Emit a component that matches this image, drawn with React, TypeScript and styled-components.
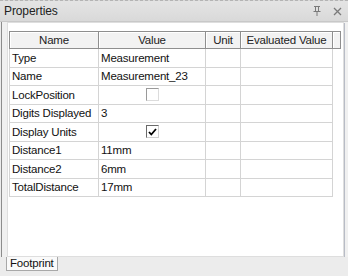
import styled, { createGlobalStyle } from 'styled-components'

const GlobalStyle = createGlobalStyle`
  html, body {
    margin: 0;
    padding: 0;
    background: #ececec;
  }
  body {
    font-family: "Liberation Sans", Arial, sans-serif;
    font-size: 11.5px;
    letter-spacing: -0.2px;
    color: #1a1a1a;
  }
`

interface PropRow {
  name: string
  value?: string
  check?: boolean
}

const rows: PropRow[] = [
  { name: 'Type', value: 'Measurement' },
  { name: 'Name', value: 'Measurement_23' },
  { name: 'LockPosition', check: false },
  { name: 'Digits Displayed', value: '3' },
  { name: 'Display Units', check: true },
  { name: 'Distance1', value: '11mm' },
  { name: 'Distance2', value: '6mm' },
  { name: 'TotalDistance', value: '17mm' },
]

const Panel = styled.div`
  width: 348px;
  height: 276px;
  display: flex;
  flex-direction: column;
  overflow: hidden;
`

const TitleBar = styled.div`
  height: 22px;
  box-sizing: border-box;
  border-top: 1px dashed #b4b4b4;
  border-bottom: 1px solid #c8c8c8;
  background: linear-gradient(#e4e4e4, #d9d9d9);
  display: flex;
  align-items: center;
  padding: 0 6px 0 4px;
  gap: 10px;
`

const Title = styled.span`
  flex: 1;
  font-size: 12px;
  letter-spacing: -0.1px;
  color: #222;
`

const TitleButton = styled.span`
  width: 10px;
  height: 10px;
  display: flex;
  align-items: center;
  justify-content: center;
`

const Frame = styled.div`
  flex: 1;
  margin-left: 1px;
  border-left: 1px solid #8c8c8c;
  background: #f0f0f0;
  padding: 0 4px 0 5px;
  display: flex;
`

const Content = styled.div`
  flex: 1;
  background: #fff;
  border: 1px solid #dedede;
  box-shadow: 1px 1px 0 #b8bcc6;
  padding: 8px 0 0 1px;
`

const Grid = styled.div`
  display: grid;
  grid-template-columns: 90px 107px 35px 92px 8px;
  width: 332px;
`

const HeadCell = styled.div`
  height: 18px;
  box-sizing: border-box;
  background: #f2f2f2;
  border-top: 1px solid #8e8e8e;
  border-bottom: 1px solid #8e8e8e;
  border-right: 1px solid #8e8e8e;
  box-shadow: inset 1px 1px 0 #fff;
  display: flex;
  align-items: center;
  justify-content: center;
  color: #222;
  &:first-child {
    border-left: 1px solid #8e8e8e;
  }
`

const Cell = styled.div<{ $first?: boolean; $center?: boolean }>`
  height: 18.5px;
  box-sizing: border-box;
  border-right: 1px solid #d4d4d4;
  border-bottom: 1px solid #d4d4d4;
  border-left: ${(p) => (p.$first ? '1px solid #d4d4d4' : 'none')};
  display: flex;
  align-items: center;
  justify-content: ${(p) => (p.$center ? 'center' : 'flex-start')};
  padding-left: ${(p) => (p.$center ? '0' : '2px')};
  white-space: nowrap;
  overflow: hidden;
  color: #111;
`

const Spacer = styled.div``

const Check = styled.span<{ $on: boolean }>`
  width: 13px;
  height: 13px;
  box-sizing: border-box;
  background: #fff;
  border: 1px solid;
  border-color: ${(p) => (p.$on ? '#6a6a6a #d0d0d0 #d0d0d0 #6a6a6a' : '#9a9a9a #dcdcdc #dcdcdc #9a9a9a')};
  display: flex;
  align-items: center;
  justify-content: center;
`

const TabBar = styled.div`
  height: 19px;
  background: #ececec;
  padding-left: 6px;
  display: flex;
  align-items: flex-start;
`

const Tab = styled.div`
  height: 13px;
  padding: 0 3px;
  background: #fafafa;
  border: 1px solid #a8a8a8;
  border-top: none;
  font-size: 11.5px;
  line-height: 13px;
  color: #111;
`

const PinIcon = () => (
  <svg width="8" height="10" viewBox="0 0 8 10">
    <path d="M1 0.5h6M2.5 0.5v5M5.5 0.5v5M0.5 5.5h7M4 5.5v4.5" stroke="#7a7a7a" strokeWidth="1" fill="none" />
  </svg>
)

const CloseIcon = () => (
  <svg width="9" height="9" viewBox="0 0 9 9">
    <path d="M1 1l7 7M8 1l-7 7" stroke="#7a7a7a" strokeWidth="1.3" />
  </svg>
)

const Tick = () => (
  <svg width="9" height="8" viewBox="0 0 9 8">
    <path d="M1 4l2.3 2.5L8 1" stroke="#000" strokeWidth="1.8" fill="none" />
  </svg>
)

export default function App() {
  return (
    <>
      <GlobalStyle />
      <Panel>
        <TitleBar>
          <Title>Properties</Title>
          <TitleButton><PinIcon /></TitleButton>
          <TitleButton><CloseIcon /></TitleButton>
        </TitleBar>
        <Frame>
          <Content>
            <Grid>
              <HeadCell>Name</HeadCell>
              <HeadCell>Value</HeadCell>
              <HeadCell>Unit</HeadCell>
              <HeadCell>Evaluated Value</HeadCell>
              <HeadCell />
              {rows.map((r) => (
                <Row key={r.name} row={r} />
              ))}
            </Grid>
          </Content>
        </Frame>
        <TabBar>
          <Tab>Footprint</Tab>
        </TabBar>
      </Panel>
    </>
  )
}

const Row = ({ row }: { row: PropRow }) => (
  <>
    <Cell $first>{row.name}</Cell>
    {row.check === undefined ? (
      <Cell>{row.value}</Cell>
    ) : (
      <Cell $center>
        <Check $on={row.check}>{row.check && <Tick />}</Check>
      </Cell>
    )}
    <Cell />
    <Cell />
    <Spacer />
  </>
)
